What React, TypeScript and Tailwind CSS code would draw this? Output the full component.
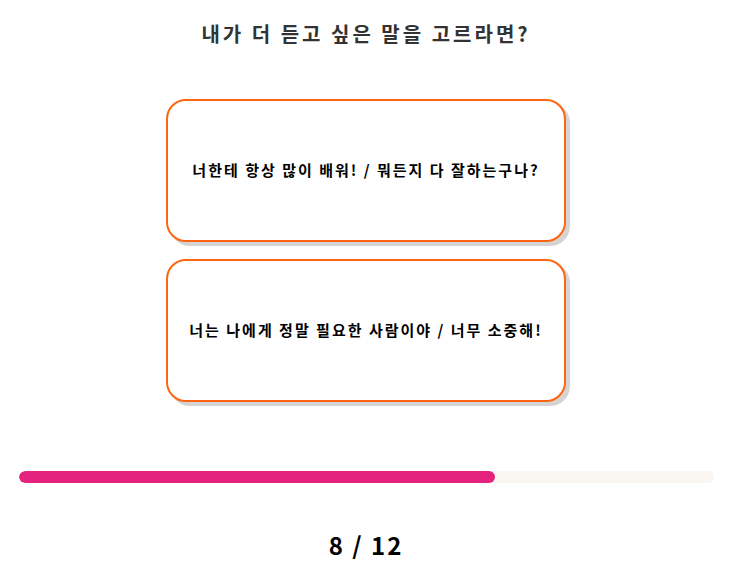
const options = [
  '너한테 항상 많이 배워! / 뭐든지 다 잘하는구나?',
  '너는 나에게 정말 필요한 사람이야 / 너무 소중해!',
];

export default function App() {
  const current = 8;
  const total = 12;

  return (
    <div
      className="w-[732px] h-[580px] bg-white flex flex-col items-center"
      style={{ fontFamily: '"Noto Sans CJK KR", "Noto Sans", sans-serif' }}
    >
      <h1 className="mt-[19px] h-[30px] text-[20px] leading-[30px] font-bold tracking-[3px] text-[#333333]">
        내가 더 듣고 싶은 말을 고르라면?
      </h1>

      <div className="mt-[50px] flex flex-col gap-[17px]">
        {options.map((text) => (
          <button
            key={text}
            className="w-[400px] h-[143px] rounded-[20px] border-2 border-[#ff6411] bg-white shadow-[4px_4px_0_#d4d4d4] flex items-center justify-center text-[15px] font-bold tracking-[2px] text-black"
          >
            {text}
          </button>
        ))}
      </div>

      <div className="mt-[69px] w-[695px] h-[12px] rounded-full bg-[#f9f6f2] overflow-hidden">
        <div className="h-full rounded-full bg-[#e6227f] w-[476px]" />
      </div>

      <div className="mt-[46px] text-[24px] leading-[32px] font-bold tracking-[2px] text-black">
        {current} / {total}
      </div>
    </div>
  );
}
